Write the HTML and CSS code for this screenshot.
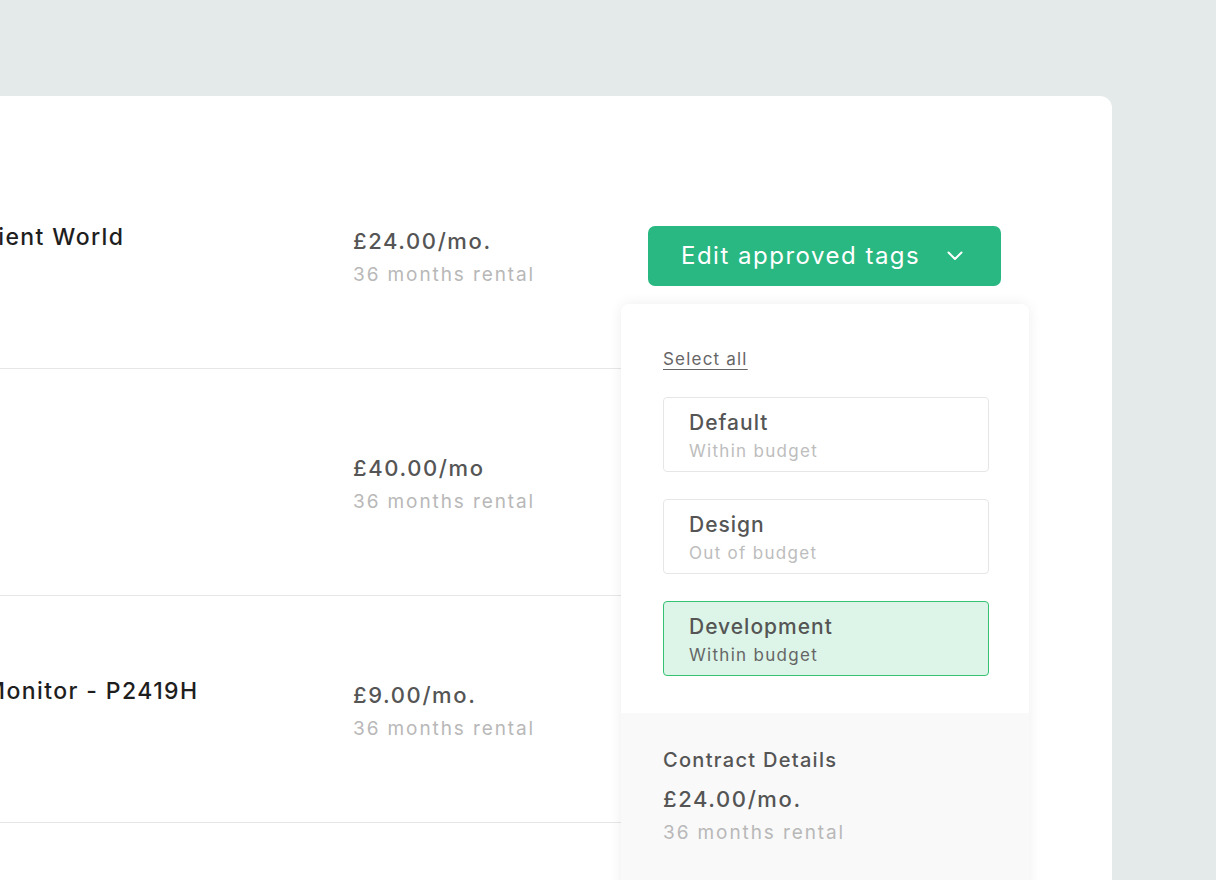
FILE: index.html
```html
<!DOCTYPE html>
<html lang="en">
<head>
<meta charset="utf-8">
<title>Approved tags</title>
<link rel="stylesheet" href="styles.css">
</head>
<body>
<div class="page">
  <div class="card">
    <div class="row">
      <div class="cell name-cell"><span class="name">JBL Ambient World</span></div>
      <div class="cell price-cell">
        <div class="price">£24.00/mo.</div>
        <div class="sub">36 months rental</div>
      </div>
      <div class="action-cell">
        <div class="action">
          <button class="btn">Edit approved tags
            <svg class="chev" width="16" height="10" viewBox="0 0 16 10"><path d="M1.5 1.5 L8 8 L14.5 1.5" fill="none" stroke="#fff" stroke-width="2" stroke-linecap="round" stroke-linejoin="round"/></svg>
          </button>
          <div class="dropdown">
            <div class="dd-top">
              <a class="select-all">Select all</a>
              <div class="options">
                <div class="option">
                  <div class="opt-title">Default</div>
                  <div class="opt-sub">Within budget</div>
                </div>
                <div class="option">
                  <div class="opt-title">Design</div>
                  <div class="opt-sub">Out of budget</div>
                </div>
                <div class="option selected">
                  <div class="opt-title">Development</div>
                  <div class="opt-sub">Within budget</div>
                </div>
              </div>
            </div>
            <div class="dd-bottom">
              <div class="cd-title">Contract Details</div>
              <div class="cd-price">£24.00/mo.</div>
              <div class="cd-sub">36 months rental</div>
            </div>
          </div>
        </div>
      </div>
    </div>
    <div class="row">
      <div class="cell name-cell"><span class="name"></span></div>
      <div class="cell price-cell">
        <div class="price">£40.00/mo</div>
        <div class="sub">36 months rental</div>
      </div>
      <div class="action-cell"></div>
    </div>
    <div class="row">
      <div class="cell name-cell"><span class="name">Dell 24 Monitor - P2419H</span></div>
      <div class="cell price-cell">
        <div class="price">£9.00/mo.</div>
        <div class="sub">36 months rental</div>
      </div>
      <div class="action-cell"></div>
    </div>
    <div class="row">
      <div class="cell name-cell"></div>
      <div class="cell price-cell"></div>
      <div class="action-cell"></div>
    </div>
  </div>
</div>
</body>
</html>
```

FILE: styles.css
```css
* { box-sizing: border-box; }
html, body {
  margin: 0;
  height: 100%;
  overflow: hidden;
}
body {
  background: #e4e9e9;
  font-family: "Inter", "Noto Sans", sans-serif;
  color: #555;
}
.page {
  padding-top: 96px;
}
.card {
  margin-left: -150px;
  width: 1262px;
  height: 900px;
  background: #fff;
  border-radius: 12px 12px 0 0;
  padding-top: 46px;
  padding-left: 40px;
}
.row {
  display: grid;
  grid-template-columns: 463px 295px 1fr;
  height: 227px;
}
.cell {
  border-bottom: 1px solid #e6e6e6;
  display: flex;
  flex-direction: column;
  justify-content: center;
}
.name-cell {
  padding-bottom: 37px;
  white-space: nowrap;
}
.price-cell {
  padding-top: 6px;
}
.name {
  font-size: 23px;
  line-height: 32px;
  font-weight: 500;
  color: #1e1e1e;
  letter-spacing: 1.4px;
}
.price {
  font-size: 22px;
  line-height: 34px;
  font-weight: 500;
  color: #555;
  letter-spacing: 1.6px;
}
.sub {
  font-size: 19px;
  line-height: 34px;
  color: #b8b8b8;
  letter-spacing: 1.9px;
}
.action-cell {
  display: flex;
  align-items: center;
}
.action {
  position: relative;
}
.btn {
  display: flex;
  align-items: center;
  width: 353px;
  height: 60px;
  padding: 0 0 0 33px;
  border: 0;
  border-radius: 7px;
  background: #29b882;
  color: #fff;
  font-family: inherit;
  font-size: 24px;
  letter-spacing: 1.5px;
}
.chev {
  margin-left: auto;
  margin-right: 38px;
}
.dropdown {
  position: absolute;
  top: 78px;
  left: -27px;
  width: 408px;
  height: 620px;
  background: #fff;
  border-radius: 8px 8px 0 0;
  box-shadow: 0 0 14px rgba(0, 0, 0, 0.07);
  overflow: hidden;
  z-index: 2;
}
.dd-top {
  padding: 42px 40px 37px 42px;
}
.select-all {
  display: block;
  font-size: 17px;
  line-height: 26px;
  color: #666;
  text-decoration: underline;
  text-underline-offset: 4px;
  letter-spacing: 1.2px;
}
.options {
  margin-top: 25px;
  display: flex;
  flex-direction: column;
  gap: 27px;
}
.option {
  height: 75px;
  border: 1.5px solid #e6e6e6;
  border-radius: 4px;
  padding: 11px 24px 0 25px;
}
.option.selected {
  background: #dcf5e8;
  border-color: #35c272;
}
.opt-title {
  font-size: 21px;
  line-height: 28px;
  font-weight: 500;
  color: #555;
  letter-spacing: 1px;
}
.opt-sub {
  font-size: 17px;
  line-height: 28px;
  color: #bdbdbd;
  letter-spacing: 1.3px;
}
.option.selected .opt-sub {
  color: #666;
}
.dd-bottom {
  background: #f9f9f9;
  height: 400px;
  padding: 34px 42px 0 42px;
}
.cd-title {
  font-size: 20px;
  line-height: 26px;
  font-weight: 500;
  color: #555;
  letter-spacing: 1.3px;
}
.cd-price {
  margin-top: 13px;
  font-size: 22px;
  line-height: 26px;
  font-weight: 500;
  color: #555;
  letter-spacing: 1.6px;
}
.cd-sub {
  margin-top: 8px;
  font-size: 19px;
  line-height: 26px;
  color: #b8b8b8;
  letter-spacing: 1.9px;
}
```
